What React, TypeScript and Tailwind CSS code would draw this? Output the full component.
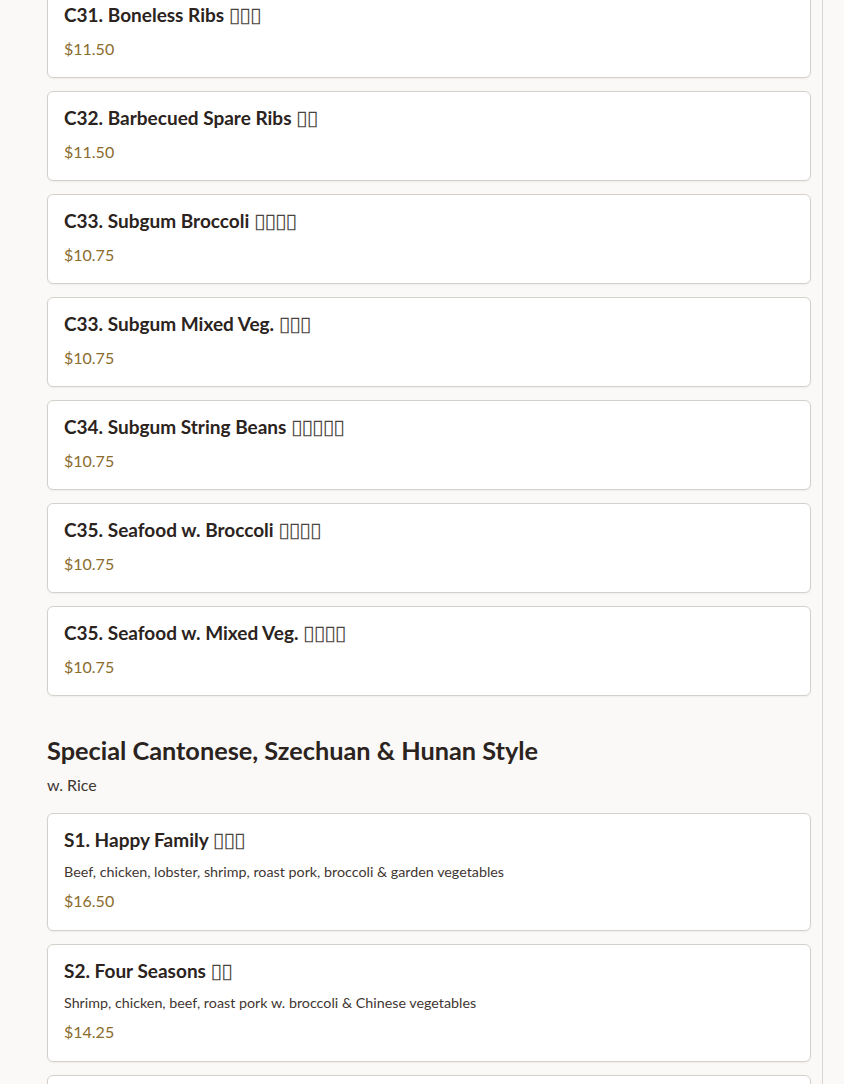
import React from "react";

interface MenuItem {
  code: string;
  name: string;
  zh: string;
  desc?: string;
  price: string;
}

const cantonese: MenuItem[] = [
  { code: "C31", name: "Boneless Ribs", zh: "▯▯▯", price: "$11.50" },
  { code: "C32", name: "Barbecued Spare Ribs", zh: "▯▯", price: "$11.50" },
  { code: "C33", name: "Subgum Broccoli", zh: "▯▯▯▯", price: "$10.75" },
  { code: "C33", name: "Subgum Mixed Veg.", zh: "▯▯▯", price: "$10.75" },
  { code: "C34", name: "Subgum String Beans", zh: "▯▯▯▯▯", price: "$10.75" },
  { code: "C35", name: "Seafood w. Broccoli", zh: "▯▯▯▯", price: "$10.75" },
  { code: "C35", name: "Seafood w. Mixed Veg.", zh: "▯▯▯▯", price: "$10.75" },
];

const specials: MenuItem[] = [
  {
    code: "S1",
    name: "Happy Family",
    zh: "▯▯▯",
    desc: "Beef, chicken, lobster, shrimp, roast pork, broccoli & garden vegetables",
    price: "$16.50",
  },
  {
    code: "S2",
    name: "Four Seasons",
    zh: "▯▯",
    desc: "Shrimp, chicken, beef, roast pork w. broccoli & Chinese vegetables",
    price: "$14.25",
  },
  {
    code: "S3",
    name: "Triple Delight",
    zh: "▯▯▯",
    desc: "Shrimp, chicken & beef w. mixed vegetables",
    price: "$14.25",
  },
];

function ItemCard({ item }: { item: MenuItem }) {
  return (
    <div
      className={
        item.desc
          ? "bg-white border border-[#d4d1cd] rounded-md shadow-[0_1px_2px_rgba(0,0,0,0.05)] px-4 pt-[14px] pb-[18px]"
          : "bg-white border border-[#d4d1cd] rounded-md shadow-[0_1px_2px_rgba(0,0,0,0.05)] px-4 pt-[14px] pb-[17px]"
      }
    >
      <h3 className="h-[24px] text-[19px] leading-[24px] font-bold text-[#2b2320] whitespace-nowrap">
        {item.code}. {item.name}{" "}
        <span className="inline-block align-top h-[24px] leading-[24px] font-normal text-[#4a4440] [font-family:'DejaVu_Sans',sans-serif] text-[21px] tracking-[-1px]">
          {item.zh}
        </span>
      </h3>
      {item.desc ? (
        <>
          <p className="mt-[10px] text-[14.3px] leading-[19px] text-[#3f3632]">{item.desc}</p>
          <p className="mt-[9px] text-[16px] leading-[22px] text-[#8a6c2d]">{item.price}</p>
        </>
      ) : (
        <p className="mt-[11px] text-[16px] leading-[22px] text-[#8a6c2d]">{item.price}</p>
      )}
    </div>
  );
}

export default function App() {
  return (
    <div className="flex h-[1084px] overflow-hidden bg-[#faf9f7] [font-family:Lato,'Noto_Sans',sans-serif]">
      <main className="w-[823px] shrink-0 border-r border-[#d9d6d2] pl-[47px] pr-[11px]">
        <div className="-mt-[12px] flex flex-col gap-[13px]">
          {cantonese.map((item, i) => (
            <ItemCard key={i} item={item} />
          ))}
        </div>

        <section className="mt-[38px]">
          <h2 className="text-[25.3px] leading-[32px] font-bold text-[#2b2320]">
            Special Cantonese, Szechuan &amp; Hunan Style
          </h2>
          <p className="mt-2 text-[16px] leading-[22px] text-[#3f3632]">w. Rice</p>
          <div className="mt-[17px] flex flex-col gap-[13px]">
            {specials.map((item, i) => (
              <ItemCard key={i} item={item} />
            ))}
          </div>
        </section>
      </main>
      <div className="flex-1 bg-[#faf9f7]" />
    </div>
  );
}
